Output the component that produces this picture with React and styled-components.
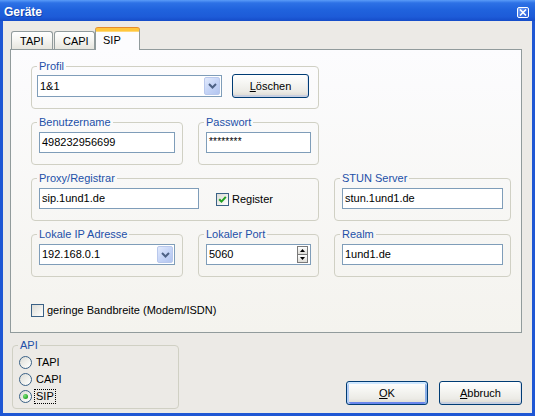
import React from "react";
import styled, { createGlobalStyle, css } from "styled-components";

const GlobalStyle = createGlobalStyle`
  html, body { margin: 0; padding: 0; }
  body {
    font-family: "Liberation Sans", Arial, sans-serif;
    font-size: 11px;
    color: #000;
    background: #ffffff;
  }
  *, *::before, *::after { box-sizing: border-box; }
`;

const Window = styled.div`
  width: 535px;
  height: 416px;
  display: flex;
  flex-direction: column;
  overflow: hidden;
`;

const TitleBar = styled.div`
  height: 21px;
  flex: none;
  display: flex;
  align-items: center;
  justify-content: space-between;
  padding: 3px 6px 0 4px;
  background: linear-gradient(
    180deg,
    #5a9cf8 0%,
    #2d71e6 14%,
    #2063dd 45%,
    #1d5bd8 80%,
    #154cc8 100%
  );
`;

const Title = styled.span`
  font-weight: bold;
  font-size: 12px;
  line-height: 14px;
  color: #ffffff;
  text-shadow: 1px 1px 0 rgba(8, 30, 120, 0.5);
`;

const CloseButton = styled.span`
  width: 12px;
  height: 11px;
  border: 1px solid #ffffff;
  border-radius: 2px;
  background: linear-gradient(135deg, #7aa6f7 0%, #3a70e4 60%, #2c5fd8 100%);
  display: flex;
  align-items: center;
  justify-content: center;
`;

const Frame = styled.div`
  flex: 1;
  display: flex;
  flex-direction: column;
  padding: 7px 10px 0 7px;
  background: #eceae6;
  border: 3px solid #1f57d4;
  border-top: 0;
`;

const TabStrip = styled.div`
  display: flex;
  align-items: flex-end;
  height: 22px;
  padding-left: 1px;
  margin-bottom: -1px;
  position: relative;
  z-index: 1;
`;

const Tab = styled.div`
  width: ${(p) => p.$w}px;
  display: flex;
  border: 1px solid #919b9c;
  border-bottom: 0;
  border-radius: 3px 3px 0 0;
  line-height: 13px;
  ${(p) =>
    p.$active
      ? css`
          height: 22px;
          margin-left: -1px;
          align-items: flex-start;
          padding: 3px 0 0 7px;
          border-top: 3px solid #ffc73c;
          box-shadow: inset 0 1px 0 #ffd87a, 0 -1px 0 #e68b2c;
          background: #fcfcfe;
        `
      : css`
          height: 18px;
          margin-bottom: 1px;
          margin-right: 1px;
          align-items: center;
          padding: 1px 0 0 8px;
          background: linear-gradient(180deg, #ffffff 0%, #f6f6f3 45%, #e6e5de 100%);
        `}
`;

const TabPanel = styled.div`
  height: 284px;
  border: 1px solid #919b9c;
  background: linear-gradient(180deg, #fcfcfe 0%, #f4f3ee 100%);
  padding: 10px 0 0 20px;
  display: flex;
  flex-direction: column;
`;

const GroupGrid = styled.div`
  display: grid;
  grid-template-columns: 152px 121px 177px;
  grid-auto-rows: 49px;
  column-gap: 15px;
  row-gap: 7px;
`;

const Group = styled.fieldset`
  margin: 0;
  min-width: 0;
  border: 1px solid #d0d0c4;
  border-radius: 4px;
  display: flex;
  align-items: ${(p) => (p.$column ? "stretch" : "center")};
  flex-direction: ${(p) => (p.$column ? "column" : "row")};
  align-self: start;
  height: ${(p) => p.$h ?? 49}px;
  padding: ${(p) => p.$pt ?? 4}px ${(p) => p.$pr ?? 7}px 0
    ${(p) => p.$pl ?? 7}px;
  grid-column: ${(p) => p.$col ?? 1} / span ${(p) => p.$span ?? 1};
  grid-row: ${(p) => p.$row ?? "auto"};
  ${(p) => !p.$column && "align-items: flex-start;"}
`;

const Legend = styled.legend`
  padding: 0 2px;
  margin-left: ${(p) => p.$shift ?? -2}px;
  line-height: 12px;
  font-size: 11px;
  color: #2350a8;
`;

const TextBox = styled.div`
  height: ${(p) => p.$h ?? 21}px;
  ${(p) => (p.$w ? `width: ${p.$w}px; flex: none;` : "flex: 1;")}
  border: 1px solid #7f9db9;
  background: #ffffff;
  padding: 0 1px 0 2px;
  display: flex;
  align-items: center;
  white-space: nowrap;
  overflow: hidden;
  line-height: 13px;
`;

const Masked = styled.span`
  font-size: 10px;
  letter-spacing: 0.2px;
  margin-top: -3px;
`;

const ValueText = styled.span`
  flex: 1;
`;

const ComboArrow = styled.span`
  width: 16px;
  height: calc(100% - 2px);
  flex: none;
  border: 1px solid #b9c8ec;
  border-radius: 2px;
  background: linear-gradient(135deg, #e2eafc 0%, #c6d5f7 50%, #b3c5ef 100%);
  display: flex;
  align-items: center;
  justify-content: center;
`;

const Spinner = styled.span`
  width: 11px;
  height: 17px;
  flex: none;
  margin-right: 1px;
  display: flex;
  flex-direction: column;
  border: 1px solid #7a7a7a;
  background: #ffffff;
`;

const SpinHalf = styled.span`
  flex: 1;
  display: flex;
  align-items: center;
  justify-content: center;
  background: linear-gradient(180deg, #ffffff 0%, #dedcd6 100%);
  & + & {
    border-top: 1px solid #7a7a7a;
  }
`;

const Button = styled.button`
  width: ${(p) => p.$w}px;
  height: 24px;
  flex: none;
  padding: 0;
  font: inherit;
  color: #000;
  border: 1px solid #003c74;
  border-radius: 3px;
  background: linear-gradient(
    180deg,
    #ffffff 0%,
    #f6f6f3 35%,
    #ecebe6 75%,
    #dcd8cf 100%
  );
  box-shadow: inset 0 -2px 0 #c8cfe0, inset -1px 0 0 #dfe3ee;
  ${(p) =>
    p.$default &&
    css`
      box-shadow: inset 0 2px 0 #cee7ff, inset 2px 0 0 #b3cdf5,
        inset -2px 0 0 #8aaee6, inset 0 -2px 0 #6a86ec;
    `}
`;

const CheckLabel = styled.label`
  display: flex;
  align-items: center;
  gap: 3px;
  line-height: 13px;
  white-space: nowrap;
  ${(p) => p.$indent && `margin-left: ${p.$indent}px;`}
  ${(p) => p.$top != null && `margin-top: ${p.$top}px;`}
`;

const CheckBox = styled.span`
  width: 13px;
  height: 13px;
  flex: none;
  border: 1px solid #3a6186;
  background: linear-gradient(135deg, #dcdcd6 0%, #f4f4f1 70%, #ffffff 100%);
  display: flex;
  align-items: center;
  justify-content: center;
`;

const Footer = styled.div`
  display: flex;
  justify-content: space-between;
  align-items: flex-start;
  margin-top: 6px;
  padding-left: 2px;
`;

const ApiGroup = styled(Group)`
  width: 167px;
  flex: none;
`;

const RadioRow = styled.label`
  height: 17px;
  display: flex;
  align-items: center;
  gap: 3px;
  line-height: 13px;
`;

const RadioCircle = styled.span`
  width: 13px;
  height: 13px;
  flex: none;
  border-radius: 50%;
  border: 1px solid #3a6186;
  background: linear-gradient(135deg, #dcdcd6 0%, #f6f6f3 70%, #ffffff 100%);
  display: flex;
  align-items: center;
  justify-content: center;
  ${(p) =>
    p.$on &&
    css`
      &::after {
        content: "";
        width: 5px;
        height: 5px;
        border-radius: 50%;
        background: radial-gradient(circle at 35% 35%, #7be27a, #21a121 75%);
      }
    `}
`;

const RadioText = styled.span`
  padding: 0 1px;
  ${(p) => p.$focus && "outline: 1px dotted #000; outline-offset: 0;"}
`;

const ButtonRow = styled.div`
  display: flex;
  gap: 11px;
  margin-top: 42px;
`;

const Chevron = () => (
  <svg width="9" height="6" viewBox="0 0 9 6">
    <path d="M1 1 L4.5 4.5 L8 1" fill="none" stroke="#4d6185" strokeWidth="2" />
  </svg>
);

const CloseX = () => (
  <svg width="8" height="7" viewBox="0 0 8 7">
    <path d="M1 0.5 L7 6.5 M7 0.5 L1 6.5" stroke="#fff" strokeWidth="1.6" />
  </svg>
);

const Tick = () => (
  <svg width="9" height="9" viewBox="0 0 9 9">
    <path d="M1.2 4.2 L3.5 6.6 L7.8 1.8" fill="none" stroke="#21a121" strokeWidth="2" />
  </svg>
);

const Arrow = ({ up }) => (
  <svg width="5" height="3" viewBox="0 0 5 3">
    <polygon points={up ? "0,3 5,3 2.5,0" : "0,0 5,0 2.5,3"} fill="#000" />
  </svg>
);

const Combo = ({ value, h }) => (
  <TextBox $h={h} style={{ paddingRight: 1 }}>
    <ValueText>{value}</ValueText>
    <ComboArrow>
      <Chevron />
    </ComboArrow>
  </TextBox>
);

const Radio = ({ label, on }) => (
  <RadioRow>
    <RadioCircle $on={on} />
    <RadioText $focus={on}>{label}</RadioText>
  </RadioRow>
);

export default function App() {
  return (
    <>
      <GlobalStyle />
      <Window>
        <TitleBar>
          <Title>Geräte</Title>
          <CloseButton>
            <CloseX />
          </CloseButton>
        </TitleBar>
        <Frame>
          <TabStrip>
            <Tab $w={42}>TAPI</Tab>
            <Tab $w={41}>CAPI</Tab>
            <Tab $w={45} $active>
              SIP
            </Tab>
          </TabStrip>
          <TabPanel>
            <GroupGrid>
              <Group $col={1} $span={2} $row={1} $pl={5} $pr={9} $pt={3}>
                <Legend $shift={0}>Profil</Legend>
                <Combo value="1&1" h={22} />
                <Button $w={77} style={{ marginLeft: 10, marginTop: -1 }}>
                  <u>L</u>öschen
                </Button>
              </Group>

              <Group $col={1} $row={2}>
                <Legend>Benutzername</Legend>
                <TextBox>498232956699</TextBox>
              </Group>
              <Group $col={2} $row={2}>
                <Legend>Passwort</Legend>
                <TextBox>
                  <Masked>********</Masked>
                </TextBox>
              </Group>

              <Group $col={1} $span={2} $row={3}>
                <Legend>Proxy/Registrar</Legend>
                <TextBox $w={160}>sip.1und1.de</TextBox>
                <CheckLabel $indent={17} $top={5}>
                  <CheckBox>
                    <Tick />
                  </CheckBox>
                  Register
                </CheckLabel>
              </Group>
              <Group $col={3} $row={3}>
                <Legend>STUN Server</Legend>
                <TextBox>stun.1und1.de</TextBox>
              </Group>

              <Group $col={1} $row={4}>
                <Legend>Lokale IP Adresse</Legend>
                <Combo value="192.168.0.1" />
              </Group>
              <Group $col={2} $row={4}>
                <Legend>Lokaler Port</Legend>
                <TextBox>
                  <ValueText>5060</ValueText>
                  <Spinner>
                    <SpinHalf>
                      <Arrow up />
                    </SpinHalf>
                    <SpinHalf>
                      <Arrow />
                    </SpinHalf>
                  </Spinner>
                </TextBox>
              </Group>
              <Group $col={3} $row={4}>
                <Legend>Realm</Legend>
                <TextBox>1und1.de</TextBox>
              </Group>
            </GroupGrid>

            <CheckLabel $top={27}>
              <CheckBox />
              geringe Bandbreite (Modem/ISDN)
            </CheckLabel>
          </TabPanel>

          <Footer>
            <ApiGroup as="fieldset" $column $h={70} $pl={6} $pt={3}>
              <Legend $shift={-1}>API</Legend>
              <Radio label="TAPI" />
              <Radio label="CAPI" />
              <Radio label="SIP" on />
            </ApiGroup>
            <ButtonRow>
              <Button $w={82} $default>
                <u>O</u>K
              </Button>
              <Button $w={83}>
                <u>A</u>bbruch
              </Button>
            </ButtonRow>
          </Footer>
        </Frame>
      </Window>
    </>
  );
}
